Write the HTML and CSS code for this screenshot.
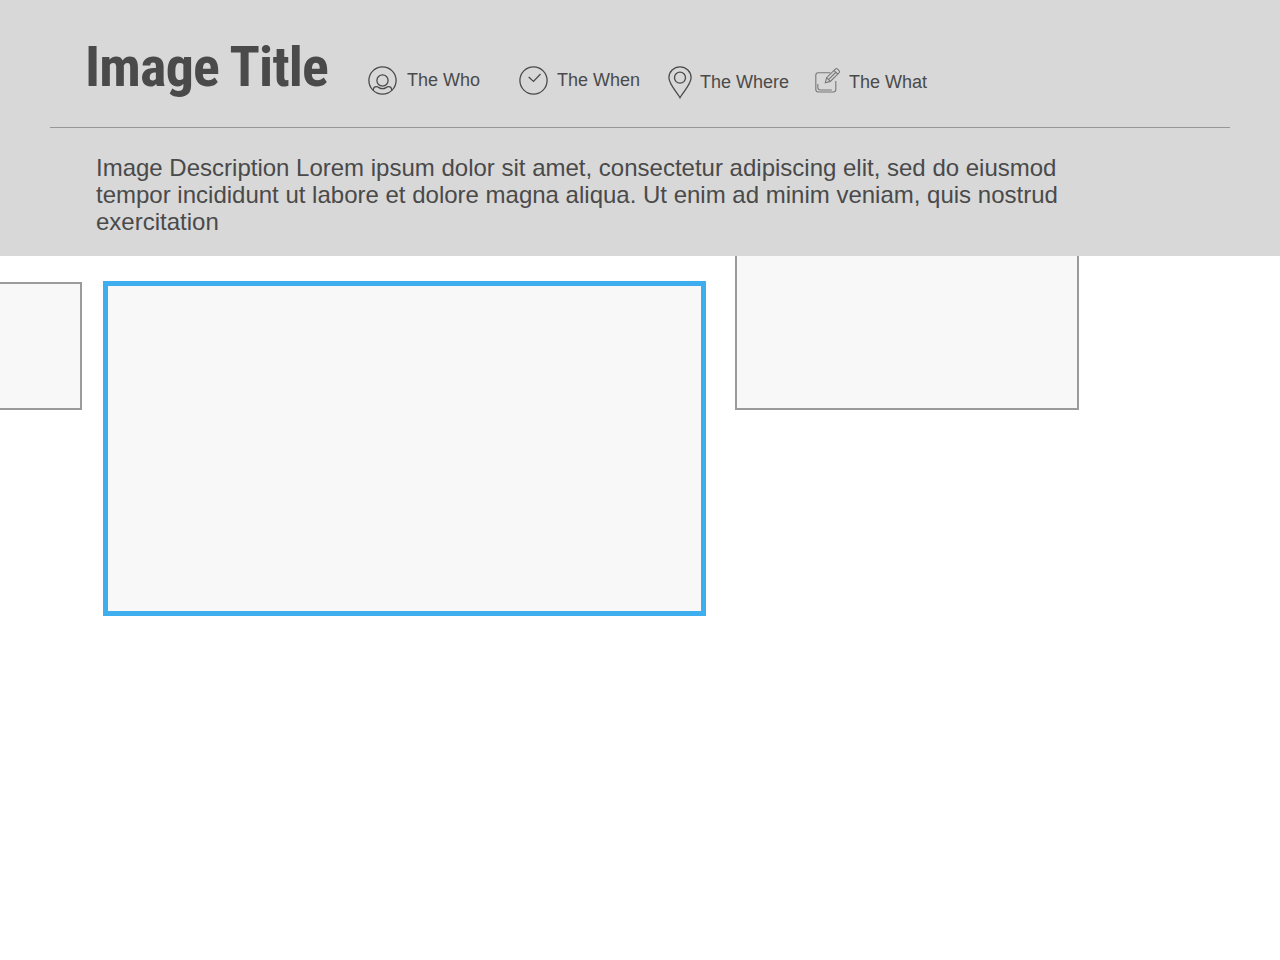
FILE: index.html
```html
<!DOCTYPE html>
<html lang="en">
<head>
<meta charset="utf-8">
<title>Image Title</title>
<link rel="stylesheet" href="styles.css">
</head>
<body>
<header class="header">
  <div class="heading">
    <h1 class="title">Image Title</h1>
    <ul class="facts">
      <li class="fact who">
        <svg width="30" height="30" viewBox="-.5 -.5 30 30"><circle cx="15" cy="15" r="13.600"/><circle cx="15" cy="15" r="5.600"/><path d="M5.800 24.800C5.800 22.400 7.200 21.200 9 21.200C11.300 21.200 11.800 23.200 15 23.200S18.700 21.200 21 21.200C22.800 21.200 24.200 22.400 24.200 24.800"/></svg>
        <span>The Who</span>
      </li>
      <li class="fact when">
        <svg width="30" height="30" viewBox="-.5 -.5 30 30"><circle cx="15" cy="15" r="13.600"/><path d="M10.200 11.500 15 15.900 22 8.500"/></svg>
        <span>The When</span>
      </li>
      <li class="fact where">
        <svg width="24" height="34" viewBox="0 -.7 24 34"><path d="M12 32C9.500 27 .9 18.500 .9 12A11.100 10.800 0 0 1 23.100 12C23.100 18.500 14.500 27 12 32Z"/><circle cx="12" cy="12" r="5.500"/></svg>
        <span>The Where</span>
      </li>
      <li class="fact what">
        <svg width="28" height="28" viewBox="-.8 0 28 28"><path d="M16.500 5.700H4.500Q2 5.700 2 8.200V22.500Q2 25 4.500 25H19.500Q22 25 22 22.500V14M4 17V20.500Q4 23 6.500 23H18"/><path d="M11.500 15.800 12.800 10.700 21.500 2.100Q22.600 1 23.800 2.200L25.200 3.600Q26.300 4.800 25.200 5.900L16.500 14.400ZM12.800 10.700 16.500 14.400M20.200 3.400 23.900 7.100M15 12.300 21.800 5.500"/></svg>
        <span>The What</span>
      </li>
    </ul>
  </div>
  <p class="description">Image Description Lorem ipsum dolor sit amet, consectetur adipiscing elit, sed do eiusmod tempor incididunt ut labore et dolore magna aliqua. Ut enim ad minim veniam, quis nostrud exercitation</p>
</header>
<main class="gallery">
  <div class="frame previous"></div>
  <div class="frame current"></div>
  <div class="frame next"></div>
</main>
</body>
</html>
```
FILE: styles.css
```css
* { box-sizing: border-box; }

body {
  margin: 0;
  background: #fff;
  color: #4a4a4a;
  font-family: "Liberation Sans", Arial, sans-serif;
}

.header {
  height: 256px;
  padding: 0 50px;
  background: #d8d8d8;
}

.heading {
  display: flex;
  height: 128px;
  padding-left: 35px;
  border-bottom: 1px solid #979797;
}

.title {
  width: 282px;
  margin: 0;
  padding-top: 34px;
  font: bold 56px/66px "Roboto Condensed", Roboto, sans-serif;
  font-stretch: 75%;
  letter-spacing: -0.8px;
  white-space: nowrap;
}

.facts {
  display: flex;
  margin: 0;
  padding: 65px 0 0;
  list-style: none;
  font-size: 18px;
  line-height: 20px;
}

.fact {
  display: flex;
  align-items: flex-start;
  white-space: nowrap;
}

.fact svg {
  flex: none;
  fill: none;
  stroke: #4a4a4a;
  stroke-width: 1.3;
}

.fact span { padding-top: 5px; }

.who { width: 151px; gap: 10px; }
.when { width: 150px; gap: 9px; }
.where { width: 145px; gap: 8px; }
.what { gap: 8px; }
.where span, .what span { padding-top: 7px; }
.what svg { margin-top: 2px; stroke: #777; stroke-width: 1.1; }

.description {
  width: 1060px;
  margin: 0;
  padding: 26px 0 0 46px;
  font-size: 24px;
  line-height: 27px;
}

.gallery {
  display: flex;
  align-items: flex-start;
  height: 704px;
  overflow: hidden;
}

.frame {
  flex: none;
  background: #f8f8f8;
  border: 2px solid #9b9b9b;
}

.previous {
  width: 82px;
  height: 128px;
  margin: 26px 21px 0 0;
  border-left: 0;
}

.current {
  width: 603px;
  height: 335px;
  margin: 25px 29px 0 0;
  border: 5px solid #3eaeef;
}

.next {
  width: 344px;
  height: 154px;
  border-top: 0;
}
```
